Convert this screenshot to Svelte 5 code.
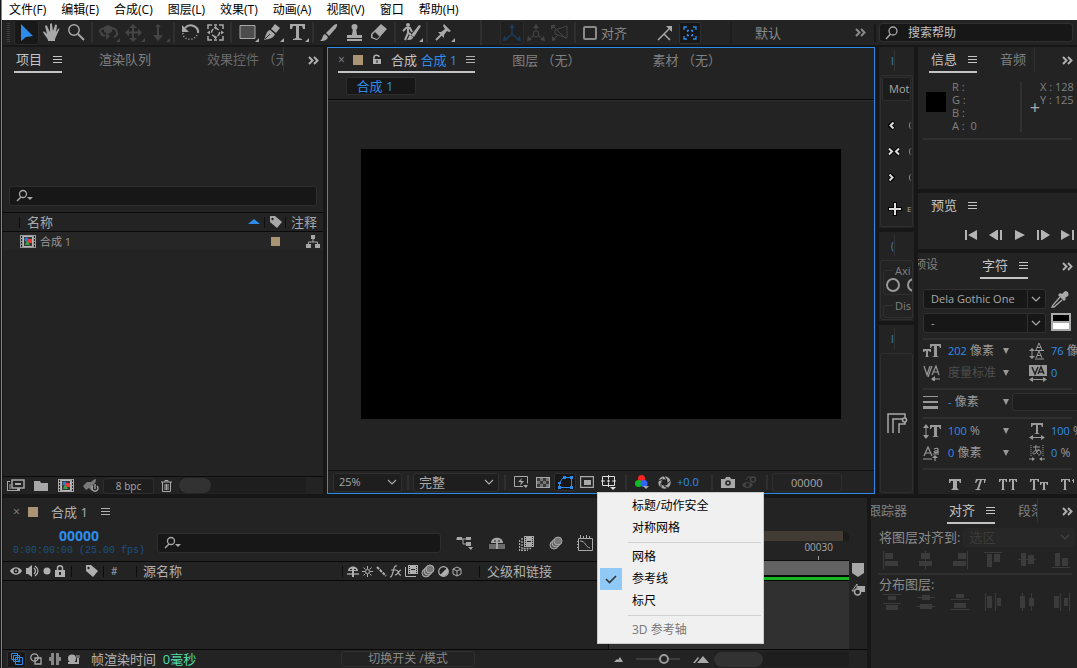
<script>
let menus = ["文件(F)", "编辑(E)", "合成(C)", "图层(L)", "效果(T)", "动画(A)", "视图(V)", "窗口", "帮助(H)"];

let corner = '<path d="M24 18v4h-4z"/>';

// [width, height, markup]
let icons = {
  arrow: [25, 25, '<path d="M7 4v17l5-4 7-1z" fill="#2d8ceb"/>'],
  hand: [25, 25, '<path d="M9 20c-1-3-4-5-5-8 1-1 2 0 4 2L6 6c1-1 2-1 2 0l3 6V4c1-1 2-1 2 0l1 7 2-6c1-1 2 0 2 1l-1 6 2-3c1-1 2 0 1 1l-4 9v2H9z"/>'],
  zoom: [25, 25, '<circle cx="10" cy="10" r="5.2" fill="none" stroke="currentColor" stroke-width="1.5"/><path d="M14 14l6 6" stroke="currentColor" stroke-width="2"/>'],
  orbit: [25, 25, '<path d="M7 14c-6-2-2-7 3-5M14 8c8 0 9 7 4 9M9 15c-2 1-4 0-4-2" fill="none" stroke="currentColor" stroke-width="2"/><path d="M8 7l4-2 4 2v5l-4 2-4-2zM10 13l4 3-4 4z"/>' + corner],
  pan: [25, 25, '<path d="M12 6v13M6 12.500h13" stroke="currentColor" stroke-width="2"/><path d="M12 4l4 4H8zM12 22l4-4H8zM4 12.500l4-4v8zM21 12.500l-4-4v8z"/>' + corner],
  dolly: [25, 25, '<path d="M12 5v13" stroke="currentColor" stroke-width="2"/><path d="M9 7h6l-3-3zM7 15h10l-5 6z"/>' + corner],
  rotate: [25, 25, '<path d="M7 8c5-6 14-1 13 5" fill="none" stroke="currentColor" stroke-width="2"/><path d="M19 15c-3 6-14 6-14-2" fill="none" stroke="currentColor" stroke-width="1.500" stroke-dasharray="1 2"/><path d="M4 5v7h7z"/>'],
  anchor: [25, 25, '<path d="M5 9V5h4M16 5h4v4M20 16v4h-4M9 20H5v-4M11 5h3M11 20h3" fill="none" stroke="currentColor" stroke-width="1.5"/><circle cx="12.5" cy="12.5" r="4" fill="none" stroke="currentColor" stroke-width="1.5" stroke-dasharray="4 2"/><path d="M12.500 5.500l2 3h-4zM12.500 19.500l2-3h-4zM4 12.500l3-2v4zM21 12.500l-3-2v4z"/>'],
  rect: [25, 25, '<path d="M5 5.500h15v13H5z" fill="#4d4d4d" stroke="currentColor"/>' + corner],
  pen: [25, 25, '<path d="M4 20c2-4 2-9 6-10l5 4c-1 4-6 5-11 6z"/><path d="M11 9l4-5 5 4-4 5z"/><path d="M5 19l5-5M10.500 9.500l5 4.500" stroke="#232323"/>' + corner],
  type: [25, 25, '<path d="M5 4h15v5h-2l-1-3h-3v12l3 1v1H8v-1l3-1V6H8L7 9H5z"/>' + corner],
  brush: [25, 25, '<path d="M19 4c2 0 1 2 0 4l-7 8-3-3 8-8zM8 14l3 3c-1 4-5 4-8 4 3-2 2-6 5-7z"/>'],
  stamp: [25, 25, '<circle cx="12.500" cy="7" r="3"/><path d="M11 8h3l1 7h5v3H5v-3h5zM5 19h15v2H5z"/>'],
  eraser: [25, 25, '<path d="M4 14L14 4l6 5-10 11-6-2z"/><path d="M5 14.500l3-3 5 5-3 3-5-2z" fill="#232323" stroke="currentColor"/>'],
  roto: [25, 25, '<path d="M20 5l2 1-7 11-3-2zM11 15l3 2c0 3-4 3-6 3 2-2 1-4 3-5z"/><circle cx="9" cy="5" r="2"/><path d="M4 11l3-3h4l2 4M9 8v5l-3 7M10 13l2 2" fill="none" stroke="currentColor" stroke-width="2"/>' + corner],
  pin: [25, 25, '<path d="M13 4l7 7-2 1-2-1-3 4v3L7 12h3l4-3-2-3z"/><path d="M11 14l-6 6" stroke="currentColor" stroke-width="2"/>' + corner],
  axis: [24, 24, '<path d="M12 5v8l-7 6M12 13l7 6" fill="none" stroke="currentColor" stroke-width="1.500"/><path d="M12 3l3 4H9zM3 20l1-5 4 4zM21 20l-1-5-4 4z"/>'],
  axisWorld: [24, 24, '<circle cx="12" cy="13" r="3" fill="none" stroke="currentColor"/><path d="M12 5v5M9 15l-4 3M15 15l4 3" stroke="currentColor"/><path d="M12 3l3 4H9zM3 20l1-5 4 4zM21 20l-1-5-4 4z"/>'],
  axisView: [24, 24, '<path d="M7 9l12-4v12l-12-4zM5 5l13 13M5 19l5-5" fill="none" stroke="currentColor"/><path d="M3 4h5L3 9zM4 20v-5l4 4z"/>'],
  snapEdge: [20, 20, '<path d="M3 17l6-6M9 11l6 6M8 12l8-8" fill="none" stroke="currentColor" stroke-width="1.500"/><path d="M11 3h6v6l-3-3z"/>'],
  snapBox: [20, 20, '<path d="M4 7V4h3M13 4h3v3M16 13v3h-3M7 16H4v-3M7.500 9V7.500H9M11 7.500h1.500V9M12.500 11v1.500H11M9 12.500H7.500V11" fill="none" stroke="currentColor" stroke-width="1.300"/>'],
  more: [11, 9, '<path d="M1 1l3.500 3.500L1 8M6 1l3.500 3.500L6 8" fill="none" stroke="currentColor" stroke-width="2"/>'],
  search: [16, 16, '<circle cx="9" cy="6" r="4" fill="none" stroke="currentColor" stroke-width="1.300"/><path d="M6.500 9L2 14" stroke="currentColor" stroke-width="1.500"/>'],
  searchDrop: [18, 14, '<circle cx="7" cy="5" r="3.500" fill="none" stroke="currentColor" stroke-width="1.300"/><path d="M5 8L1 12" stroke="currentColor" stroke-width="1.500"/><path d="M11 8h6l-3 3z"/>'],
  menu: [9, 9, '<path d="M0 1.500h9M0 4.500h9M0 7.500h9" stroke="currentColor"/>'],
  lock: [10, 11, '<path d="M1 5h8v5H1z"/><path d="M2 5V3c0-2.500 5-2.500 5 0" fill="none" stroke="currentColor" stroke-width="1.500"/><path d="M5 6v3" stroke="#232323"/>'],
  lockShut: [10, 12, '<path d="M0 5h10v7H0z"/><path d="M2.500 5V3c0-3 5-3 5 0v2" fill="none" stroke="currentColor" stroke-width="1.500"/><path d="M5 7v3" stroke="#232323" stroke-width="2"/>'],
  chevron: [10, 6, '<path d="M1 1l4 4 4-4" fill="none" stroke="currentColor" stroke-width="1.200"/>'],
  down: [6, 6, '<path d="M0 0h6L3 6z"/>'],
  sort: [12, 6, '<path d="M0 5h12L6 0z" fill="#2d8ceb"/>'],
  tag: [13, 12, '<path d="M1 0h5l7 6-5 6-7-6z"/><circle cx="3.500" cy="3" r="1.200" fill="#232323"/>'],
  comp: [16, 13, '<path d="M0 0h16v13H0z"/><path d="M1.500 1v11M14.500 1v11" stroke="#232323" stroke-dasharray="2 1"/><path d="M3.500 1.500h9v10h-9z" fill="#383838" stroke="#b8b8b8"/><circle cx="6.500" cy="4.500" r="2" fill="#2678db"/><path d="M8 4h4v4H8z" fill="#ef3434"/><path d="M7 5l3 5H5z" fill="#32a447"/>'],
  tree: [14, 13, '<path d="M5 0h4v4H5zM0 9h5v4H0zM9 9h5v4H9z"/><path d="M7 4v3M2.500 9V7h9v2" fill="none" stroke="currentColor"/>'],
  interpret: [18, 13, '<path d="M5 1h12v8H5z" fill="none" stroke="currentColor" stroke-width="1.500"/><path d="M8 4h6v2H8z"/><path d="M0 2h3v1H1v8h9v-2h3v3H0z"/><path d="M3 5v5" stroke="currentColor"/>'],
  folder: [14, 11, '<path d="M0 1h6l1 2h7v8H0z"/>'],
  rocket: [18, 14, '<path d="M1 7l4-4h4c2-2 4-3 5-3 0 3-1 4-3 6l-1 6-3-3-3 2z" opacity=".65"/><path d="M11 7a3 3 0 1 0 4 0M13 5v5" fill="none" stroke="currentColor" stroke-width="1.300"/>'],
  trash: [11, 12, '<path d="M0 2h11M4 2V.500h3V2M1.500 2v9.500h8V2M4 4v6M5.500 4v6M7 4v6" fill="none" stroke="currentColor"/>'],
  eye: [12, 10, '<path d="M0 5c3-5 9-5 12 0-3 5-9 5-12 0z"/><circle cx="6" cy="5" r="2.500" fill="#232323"/><circle cx="6" cy="5" r="1"/>'],
  sound: [13, 12, '<path d="M0 3h2l4-3v12L2 9H0z"/><path d="M8 3c2 2 2 4 0 6M9 1c4 3 4 7 0 10" fill="none" stroke="currentColor" stroke-width="1.300"/>'],
  dot: [8, 8, '<circle cx="4" cy="4" r="3.500"/>'],
  shy: [12, 11, '<path d="M1 5c0-6 10-6 10 0z"/><path d="M0 8h12" stroke="currentColor" stroke-width="1.300"/><path d="M6 4v7" stroke="currentColor" stroke-width="2"/><path d="M3 3.500h2M7 3.500h2" stroke="#232323"/>'],
  sun: [11, 11, '<circle cx="5.500" cy="5.500" r="2" fill="none" stroke="currentColor"/><path d="M5.500 0v3M5.500 8v3M0 5.500h3M8 5.500h3M1.500 1.500l2 2M7.500 7.500l2 2M9.500 1.500l-2 2M3.500 7.500l-2 2" stroke="currentColor"/>'],
  slash: [11, 11, '<path d="M1 1l9 9" stroke="currentColor" stroke-width="2" stroke-dasharray="3 1"/>'],
  frames: [13, 12, '<path d="M3 0h10v9H3z"/><path d="M.500 2v9.500H11" fill="none" stroke="currentColor"/><path d="M4.500 1v7M11.500 1v7" stroke="#232323" stroke-dasharray="1 1"/><path d="M6 4.500h4" stroke="#232323"/>'],
  framesBig: [15, 15, '<path d="M5 0h10v11H5z"/><path d="M3 2v10.500h9M.500 4v10.500H9" fill="none" stroke="currentColor" stroke-width="1.300" stroke-dasharray="2 1"/><path d="M6.500 1v9M13.500 1v9" stroke="#232323" stroke-dasharray="1 1"/><path d="M8 5.500h4" stroke="#232323"/>'],
  blur: [14, 14, '<circle cx="5" cy="9" r="4" fill="#555" stroke="currentColor"/><circle cx="7" cy="7" r="4" fill="#666" stroke="currentColor"/><circle cx="9" cy="5" r="4" fill="#777" stroke="currentColor"/>'],
  half: [11, 11, '<circle cx="5.500" cy="5.500" r="4.800" fill="none" stroke="currentColor" stroke-width="1.200"/><path d="M9 2a5 5 0 0 1-7 7z"/>'],
  cube: [10, 11, '<path d="M5 1l4 2v5l-4 2-4-2V3zM1 3l4 2 4-2M5 5v5" fill="none" stroke="currentColor"/>'],
  flow: [18, 14, '<path d="M0 3h10M7 3v5h3" fill="none" stroke="currentColor"/><path d="M1 1h5v3H1zM10 1h5v3h-5zM10 6h5v4h-5zM12 11h5l-2 3z"/>'],
  shyBig: [16, 13, '<path d="M2 6c0-7 12-7 12 0z"/><path d="M0 7h16v5H0z" opacity=".55"/><path d="M8 3v9" stroke="currentColor" stroke-width="2"/><path d="M5 4h2M9 4h2" stroke="#232323"/>'],
  graph: [16, 16, '<path d="M1.500 3.500h14v12h-14z" fill="none" stroke="currentColor"/><path d="M3.500 0v3M6.500 1v2M9.500 0v3M12.500 1v2M0 6.500h2M0 9.500h2M0 12.500h2M3 6c6 0 5 6 10 7" fill="none" stroke="currentColor"/>'],
  marker: [12, 14, '<path d="M0 0h12v10l-6 4-6-4z"/>'],
  goComp: [14, 14, '<path d="M6 3h8v6H8z"/><path d="M6 1L1 8h5z" fill="#232323" stroke="currentColor"/><circle cx="6.500" cy="9" r="3" fill="#232323" stroke="currentColor" stroke-width="1.500"/>'],
  layers: [12, 12, '<path d="M.500.500h6v6h-6zM2.500 2.500h6v6h-6zM4.500 4.500h7v7h-7z" fill="#171717" stroke="#2d8ceb"/><path d="M8 6.500v3M6.500 8h3" stroke="#2d8ceb"/>'],
  modes: [12, 12, '<circle cx="4.500" cy="4.500" r="3.700" fill="none" stroke="currentColor" stroke-width="1.300"/><path d="M5 5h6v6H5z" fill="none" stroke="currentColor" stroke-width="1.300"/>'],
  inout: [12, 12, '<path d="M2 0h3v12H2V8H0V4h2zM7 0h3v4h2v4h-2v4H7z" opacity=".75"/>'],
  snail: [13, 11, '<circle cx="5" cy="4.500" r="4"/><path d="M1 9h10V4" fill="none" stroke="currentColor" stroke-width="2"/><path d="M10 4V1M12 4V1" stroke="currentColor"/>'],
  hillSmall: [9, 5, '<path d="M0 5l3-3 1 1 2-3 3 5z"/>'],
  hillBig: [16, 7, '<path d="M0 7l5-6 1 1-4 5zM4 7l6-7 6 7z"/>'],
  fast: [14, 12, '<path d="M9 10.500H.500V.500h13v7" fill="none" stroke="currentColor"/><path d="M8 2L4 6h3l-1 4 4-5H7zM9 9h5l-2 3z"/>'],
  checker: [14, 11, '<path d="M0 0h14v11H0z"/><path d="M1 1h3v3H1zM7 1h3v3H7zM4 4h3v3H4zM10 4h3v3h-3zM1 7h3v3H1zM7 7h3v3H7z" fill="#3a3a3a"/><path d="M4 1h3v3H4zM10 1h3v3h-3zM1 4h3v3H1zM7 4h3v3H7zM4 7h3v3H4zM10 7h3v3h-3z" fill="#777"/>'],
  mask: [15, 13, '<path d="M1.500 11.500V8c1-4 3-6 5-6.500h7v10z" fill="none" stroke="#2d8ceb"/><path d="M0 10h3v3H0zM12 10h3v3h-3zM12 0h3v3h-3zM5 0h3v3H5zM0 6h3v2H0z" fill="#2d8ceb"/>'],
  region: [14, 12, '<path d="M.600.600h12.800v10.800H.600z" fill="none" stroke="currentColor" stroke-width="1.200"/><path d="M4 4h7v5H4z"/>'],
  grid: [16, 15, '<path d="M1.500 1.500h12v9h-12zM7.500 0v4M7.500 8v4M0 6h4M11 6h4M6 6h3M7.500 4.500v3" fill="none" stroke="#ddd"/><path d="M9 12h6l-3 3z" fill="#ddd"/>'],
  rgb: [14, 14, '<circle cx="6.500" cy="3.500" r="3.500" fill="#f22"/><circle cx="3.500" cy="8.500" r="3.500" fill="#1b2"/><circle cx="9" cy="8.500" r="3.500" fill="#36f"/><path d="M8 11h6l-3 3z"/>'],
  aperture: [13, 13, '<circle cx="6.500" cy="6.500" r="4.700" fill="none" stroke="currentColor" stroke-width="3"/><path d="M6 0l3 4M12.500 5L9 8M10 12l-4-2M3 12l0-5M0 5l5-2" stroke="#232323"/>'],
  camera: [14, 11, '<path d="M0 2h4l1-2h4l1 2h4v9H0z"/><circle cx="7" cy="6" r="2.800" fill="#232323"/><circle cx="7" cy="6" r="1.200"/>'],
  showSnap: [15, 13, '<path d="M0 9c2-4 9-4 11 0-2 4-9 4-11 0z"/><circle cx="5.500" cy="9" r="2" fill="#232323"/><circle cx="11" cy="3.500" r="2.500" fill="none" stroke="currentColor" stroke-width="1.500"/><path d="M4 4l2-3h3" stroke="currentColor" fill="none"/>'],
  first: [13, 10, '<path d="M0 0h2v10H0zM12 0v10L3 5z"/>'],
  prev: [13, 10, '<path d="M0 5l8-5v10zM8 0h1v10H8zM11 0h2v10h-2z"/>'],
  play: [13, 10, '<path d="M2 0l10 5-10 5z"/>'],
  next: [13, 10, '<path d="M0 0h2v10H0zM4 0h1v10H4zM5 0l8 5-8 5z"/>'],
  last: [13, 10, '<path d="M0 0l9 5-9 5zM11 0h2v10h-2z"/>'],
  easeIn: [7, 9, '<path d="M6 1L2 4.500 6 8" fill="none" stroke="#000" stroke-width="4"/><path d="M5.500 1.500L2.500 4.500l3 3" fill="none" stroke="#ddd" stroke-width="2"/>'],
  easeBoth: [12, 9, '<path d="M1 1l3 3.500L1 8M11 1L8 4.500 11 8" fill="none" stroke="#000" stroke-width="4"/><path d="M1 1.500l3 3-3 3M11 1.500l-3 3 3 3" fill="none" stroke="#ddd" stroke-width="2"/>'],
  easeOut: [7, 9, '<path d="M1 1l4 3.500L1 8" fill="none" stroke="#000" stroke-width="4"/><path d="M1.500 1.500l3 3-3 3" fill="none" stroke="#ddd" stroke-width="2"/>'],
  plus: [14, 14, '<path d="M7 0v14M0 7h14" stroke="#000" stroke-width="4"/><path d="M7 1v12M1 7h12" stroke="#ddd" stroke-width="2"/>'],
  corners: [22, 22, '<path d="M2 21V2h17v4M7 21V7h10M13 21v-9h6v-2" fill="none" stroke="currentColor" stroke-width="1.500"/><circle cx="18.500" cy="8" r="2" fill="#232323" stroke="currentColor" stroke-width="1.500"/>'],
  dropper: [18, 18, '<path d="M11 4l2-2c2-3 6 1 4 4l-3 2 1 1-2 2-6-6 2-2z"/><path d="M9 7l-7 8-1 2 2 0 8-7" fill="none" stroke="currentColor" stroke-width="1.300"/>'],
  size: [18, 16, '<path d="M7 1h11v4h-1l-1-2h-2v10l2 1H9l2-1V3H9L8 5H7zM0 6h8v3H7L6 8H5v5l1 1H2l1-1V8H2L1 9H0z"/>'],
  leading: [16, 18, '<path d="M7 8l3-7 3 7M8 5.500h4M7 16l3-7 3 7M8 13.500h4M6 8.500h9M6 17h9M3 8v8" fill="none" stroke="currentColor"/><path d="M0 9h6L3 6zM0 14h6l-3 3z"/>'],
  kerning: [18, 16, '<path d="M1 1l3 9 3-9M9 10l4-9 3 9M10 7h5M9 1L5 12M10 14h7" fill="none" stroke="currentColor" stroke-width="1.200"/><path d="M8 14l4-3v6z"/>'],
  tracking: [18, 17, '<path d="M0 0h18v11H0z"/><path d="M3 2l3 7 3-7M9 9l3-7 3 7M10 7h4" fill="none" stroke="#232323" stroke-width="1.500"/><path d="M2 14.500h14" stroke="currentColor"/><path d="M0 14.500l4-2.500v5zM18 14.500L14 12v5z"/>'],
  stroke: [15, 13, '<path d="M0 0h15v1H0zM0 5h15v2H0zM0 10h15v3H0z"/>'],
  vscale: [18, 15, '<path d="M7 1h11v4h-1l-1-2h-2v9l2 1H9l2-1V3H9L8 5H7z"/><path d="M3 2v11" stroke="currentColor"/><path d="M0 4h6L3 0zM0 11h6l-3 4z"/>'],
  hscale: [16, 17, '<path d="M2 0h12v4h-1l-1-2H9v8l2 1H5l2-1V2H4L3 4H2z"/><path d="M2 14.500h12" stroke="currentColor"/><path d="M0 14.500L4 12v5zM16 14.500L12 12v5z"/>'],
  baseline: [16, 15, '<path d="M1 10l4-9 4 9M2 7h6M0 13h9M10 8h6M11 3c5-2 4 0 4 4M15 5c-5-1-5 3 0 1M12 10v5" fill="none" stroke="currentColor" stroke-width="1.200"/><path d="M9 12h6l-3-3z"/>'],
  tsume: [16, 16, '<path d="M2 0v11M14 0v11" stroke="currentColor" stroke-dasharray="1 1"/><path d="M4 2h7M7 0c-1 4 0 7 2 9M10 4c-1 3-6 7-6 4s8-4 8-1-2 3-3 3M0 14h5M16 14h-5" fill="none" stroke="currentColor"/><path d="M3 12l3 2-3 2zM13 12l-3 2 3 2z"/>'],
  bold: [12, 11, '<path d="M0 0h12v4h-1l-1-2H8v7l2 2H2l2-2V2H2L1 4H0z"/>'],
  italic: [12, 11, '<path d="M2 0h10l-1 4h-1V1H8L5 10h2l-1 1H1l1-1h1L6 1H4L2 4H1z"/>'],
  caps: [18, 11, '<path d="M0 0h8v3H7L6 1H5v9l1 1H2l1-1V1H2L1 3H0zM10 0h8v3h-1l-1-2h-1v9l1 1h-4l1-1V1h-1l-1 2h-1z"/>'],
  smallCaps: [18, 11, '<path d="M0 0h9v3H8L7 1H5v9l1 1H2l1-1V1H2L1 3H0zM10 3h8v3h-1l-1-2h-1v6l1 1h-4l1-1V4h-1l-1 2h-1z"/>'],
  superscript: [14, 11, '<path d="M0 0h9v3H8L7 1H5v9l1 1H2l1-1V1H2L1 3H0zM12 0h1v4h-1zM11 1h1v1h-1z"/>'],
  alignL: [18, 18, '<path d="M0 0h1v18H0zM2 2h8v6H2zM2 10h13v5H2z"/>'],
  alignC: [18, 18, '<path d="M8 0h1v18H8zM4 2h9v6H4zM2 10h13v5H2z"/>'],
  alignR: [18, 18, '<path d="M16 0h1v18h-1zM7 2h8v6H7zM2 10h13v5H2z"/>'],
  alignT: [18, 18, '<path d="M0 1h18v1H0zM3 3h5v13H3zM10 3h6v8h-6z"/>'],
  alignM: [18, 18, '<path d="M0 8h18v1H0zM3 2h5v13H3zM10 4h6v9h-6z"/>'],
  alignB: [18, 18, '<path d="M0 16h18v1H0zM3 2h5v13H3zM10 7h6v8h-6z"/>'],
  distT: [18, 18, '<path d="M0 1h18v1H0zM0 10h18v1H0zM5 3h8v4H5zM3 12h12v5H3z"/>'],
  distM: [18, 18, '<path d="M0 4h18v1H0zM0 13h18v1H0zM5 2h8v5H5zM3 11h12v5H3z"/>'],
  distB: [18, 18, '<path d="M0 6h18v1H0zM0 16h18v1H0zM5 1h8v4H5zM3 10h12v5H3z"/>'],
  distL: [18, 18, '<path d="M1 0h1v18H1zM11 0h1v18h-1zM3 3h5v12H3zM13 5h4v8h-4z"/>'],
  distC: [18, 18, '<path d="M4 0h1v18H4zM13 0h1v18h-1zM2 3h5v12H2zM11 5h5v8h-5z"/>'],
  distR: [18, 18, '<path d="M8 0h1v18H8zM17 0h1v18h-1zM2 3h5v12H2zM12 5h4v8h-4z"/>'],
  check: [12, 9, '<path d="M1 4l3.500 3.500L11 1" fill="none" stroke="#333" stroke-width="1.600"/>'],
  fx: [12, 13, '<path d="M7 1c-3-1-3 3-4 6s-1 5-3 5M1 5h5M6 5c3 0 2 6 5 5M11 5c-2 0-3 5-6 5" fill="none" stroke="currentColor" stroke-width="1.200"/>'],
};

let toolGroups = [
  ["arrow", "hand", "zoom"],
  ["orbit", "pan", "dolly"],
  ["rotate", "anchor"],
  ["rect", "pen", "type"],
  ["brush", "stamp", "eraser"],
  ["roto"],
  ["pin"],
];
let dimTools = ["orbit", "pan", "dolly"];

let guides = $state([
  { label: "标题/动作安全", checked: false },
  { label: "对称网格", checked: false },
  null,
  { label: "网格", checked: false },
  { label: "参考线", checked: true },
  { label: "标尺", checked: false },
  null,
  { label: "3D 参考轴", checked: false, disabled: true },
]);

let snapping = $state(false);
let tlZoom = $state(68);

function toggleGuide(g) {
  g.checked = !g.checked;
}
</script>

{#snippet icon(name)}
  <svg class="icon" width={icons[name][0]} height={icons[name][1]} viewBox="0 0 {icons[name][0]} {icons[name][1]}" fill="currentColor" aria-hidden="true">{@html icons[name][2]}</svg>
{/snippet}

{#snippet iconButton(name)}
  <button class="ib" aria-label={name}>{@render icon(name)}</button>
{/snippet}

<div class="app">
  <nav class="menubar">
    {#each menus as m}
      <button>{m}</button>
    {/each}
  </nav>

  <div class="toolbar">
    <span class="grip"></span>
    {#each toolGroups as group, i}
      {#if i > 0}<span class="sep"></span>{/if}
      {#each group as t}
        <button class="tool" class:active={t === "arrow"} class:dim={dimTools.includes(t)} aria-label={t}>{@render icon(t)}</button>
      {/each}
    {/each}
    <div class="axes">
      <button class="tool axis-on" aria-label="axis">{@render icon("axis")}</button>
      <button class="tool dim" aria-label="world">{@render icon("axisWorld")}</button>
      <button class="tool dim" aria-label="view">{@render icon("axisView")}</button>
    </div>
    <span class="sep"></span>
    <label class="snap"><input type="checkbox" bind:checked={snapping} />对齐</label>
    <div class="snap-opts">
      {@render iconButton("snapEdge")}
      <button class="ib boxed blue" aria-label="snap">{@render icon("snapBox")}</button>
    </div>
    <div class="workspace-name">
      <button>默认</button>
      {@render iconButton("more")}
    </div>
    <label class="help">{@render icon("search")}<input type="text" placeholder="搜索帮助" /></label>
  </div>

  <div class="upper">
    <section class="panel project">
      <div class="tabs">
        <button class="tab on">项目 {@render icon("menu")}</button>
        <button class="tab queue">渲染队列</button>
        <button class="tab clip effects">效果控件 （无）</button>
        <span class="tabs-more">{@render iconButton("more")}</span>
      </div>
      <div class="preview-space"></div>
      <label class="search">{@render icon("searchDrop")}<input type="text" aria-label="搜索" /></label>
      <table class="items">
        <thead>
          <tr>
            <th class="c-pad"></th>
            <th class="c-name"><div>名称 {@render icon("sort")}</div></th>
            <th class="c-tag">{@render icon("tag")}</th>
            <th class="c-note">注释</th>
          </tr>
        </thead>
        <tbody>
          <tr>
            <td></td>
            <td><div class="item">{@render icon("comp")}合成 1</div></td>
            <td><i class="swatch small"></i></td>
            <td class="tree">{@render icon("tree")}</td>
          </tr>
        </tbody>
      </table>
      <div class="grow"></div>
      <footer class="pfoot">
        {@render iconButton("interpret")}
        {@render iconButton("folder")}
        {@render iconButton("comp")}
        {@render iconButton("rocket")}
        <button class="bpc">8 bpc</button>
        {@render iconButton("trash")}
        <div class="scroll"><i class="pill"></i></div>
      </footer>
    </section>

    <section class="panel viewer">
      <div class="tabs">
        <button class="tab on comp-tab">
          <span class="close">×</span><i class="swatch"></i>{@render icon("lock")}
          <span>合成 <em>合成 1</em></span>{@render icon("menu")}
        </button>
        <button class="tab layer">图层 （无）</button>
        <button class="tab footage">素材 （无）</button>
      </div>
      <div class="crumbs"><button>合成 1</button></div>
      <div class="stage"><div class="canvas"></div></div>
      <footer class="vfoot">
        <label class="select zoomsel"><select aria-label="缩放"><option>25%</option></select>{@render icon("chevron")}</label>
        <span class="bar"></span>
        <label class="select ressel"><select aria-label="分辨率"><option>完整</option></select>{@render icon("chevron")}</label>
        <span class="bar"></span>
        {@render iconButton("fast")}
        {@render iconButton("checker")}
        <button class="ib boxed" aria-label="mask">{@render icon("mask")}</button>
        {@render iconButton("region")}
        <div class="guides">
          <button class="ib" aria-label="guides">{@render icon("grid")}</button>
          <div class="popup" role="menu">
            {#each guides as g}
              {#if g}
                <button role="menuitemcheckbox" aria-checked={g.checked} disabled={g.disabled} onclick={() => toggleGuide(g)}>
                  <span class="mark" class:checked={g.checked}>{#if g.checked}{@render icon("check")}{/if}</span>{g.label}
                </button>
              {:else}
                <hr />
              {/if}
            {/each}
          </div>
        </div>
        <span class="bar"></span>
        {@render iconButton("rgb")}
        {@render iconButton("aperture")}
        <button class="exposure">+0.0</button>
        <span class="bar"></span>
        {@render iconButton("camera")}
        <button class="ib dim" aria-label="snapshot">{@render icon("showSnap")}</button>
        <span class="bar"></span>
        <button class="frame">00000</button>
      </footer>
    </section>

    <div class="narrow">
      <section class="panel motion">
        <div class="mini-tab"><span>I</span></div>
        <div class="mini-body">
          <button class="mot">Moti</button>
          <div class="mrow">{@render icon("easeIn")}<i class="knob"></i></div>
          <div class="mrow">{@render icon("easeBoth")}<i class="knob"></i></div>
          <div class="mrow">{@render icon("easeOut")}<i class="knob"></i></div>
          <div class="mrow add">{@render icon("plus")}<span>E</span></div>
        </div>
      </section>
      <section class="panel camera">
        <div class="mini-tab"><span>(</span></div>
        <div class="mini-body">
          <fieldset><legend>Axi</legend><i class="ring"></i><i class="ring"></i></fieldset>
          <fieldset><legend>Dis</legend></fieldset>
        </div>
      </section>
      <section class="panel last">
        <div class="mini-tab"><span>I</span></div>
        <div class="mini-body center">{@render icon("corners")}</div>
      </section>
    </div>

    <div class="side">
      <section class="panel info">
        <div class="tabs">
          <button class="tab on">信息 {@render icon("menu")}</button>
          <button class="tab audio">音频</button>
          <span class="tabs-more">{@render iconButton("more")}</span>
        </div>
        <div class="info-body">
          <i class="color"></i>
          <div class="rgba"><span>R :</span><span>G :</span><span>B :</span><span>A : &nbsp;0</span></div>
          <i class="vline"></i>
          <span class="cross">+</span>
          <div class="xy"><span>X : 128</span><span>Y : 125</span></div>
        </div>
        <hr />
      </section>

      <section class="panel play">
        <div class="tabs"><button class="tab">预览 {@render icon("menu")}</button></div>
        <div class="transport">
          {#each ["first", "prev", "play", "next", "last"] as p}
            {@render iconButton(p)}
          {/each}
        </div>
      </section>

      <section class="panel character">
        <div class="tabs">
          <button class="tab clip presets"><span>预设</span></button>
          <button class="tab on">字符 {@render icon("menu")}</button>
          <span class="tabs-more">{@render iconButton("more")}</span>
        </div>
        <div class="fonts">
          <div class="font-selects">
            <label class="select split"><select aria-label="字体"><option>Dela Gothic One</option></select>{@render icon("chevron")}</label>
            <label class="select split"><select aria-label="样式"><option>-</option></select>{@render icon("chevron")}</label>
          </div>
          <div class="fills">
            {@render icon("dropper")}
            <i class="fillbox"></i>
          </div>
        </div>
        <hr />
        <div class="pair">
          {@render icon("size")}<span class="val"><b>202</b> 像素</span>{@render icon("down")}{@render icon("leading")}<span class="val"><b>76</b> 像素</span>
        </div>
        <div class="pair">
          {@render icon("kerning")}<span class="val off">度量标准</span>{@render icon("down")}{@render icon("tracking")}<span class="val"><b>0</b></span>
        </div>
        <hr />
        <div class="pair">
          {@render icon("stroke")}<span class="val"><b>-</b> 像素</span>{@render icon("down")}<span class="blank"></span>
        </div>
        <hr />
        <div class="pair">
          {@render icon("vscale")}<span class="val"><b>100</b> %</span>{@render icon("down")}{@render icon("hscale")}<span class="val"><b>100</b> %</span>
        </div>
        <div class="pair">
          {@render icon("baseline")}<span class="val"><b>0</b> 像素</span>{@render icon("down")}{@render icon("tsume")}<span class="val"><b>0</b> %</span>
        </div>
        <hr />
        <div class="styles">
          {#each ["bold", "italic", "caps", "smallCaps", "superscript"] as s}
            {@render iconButton(s)}
          {/each}
        </div>
      </section>
    </div>
  </div>

  <div class="lower">
    <section class="panel timeline">
      <div class="tl-main">
        <div class="tl-left">
          <div class="tl-tab"><span class="close">×</span><i class="swatch"></i>合成 1{@render icon("menu")}</div>
          <div class="tl-head">
            <div class="time"><strong>00000</strong><small>0:00:00:00 (25.00 fps)</small></div>
            <label class="search">{@render icon("searchDrop")}<input type="text" aria-label="搜索图层" /></label>
            <div class="tl-switches">
              {@render iconButton("flow")}
              {@render iconButton("shyBig")}
              {@render iconButton("framesBig")}
              {@render iconButton("blur")}
              {@render iconButton("graph")}
            </div>
          </div>
          <div class="columns">
            <div class="col av">{@render icon("eye")}{@render icon("sound")}{@render icon("dot")}{@render icon("lockShut")}</div>
            <div class="col label">{@render icon("tag")}</div>
            <div class="col num">#</div>
            <div class="col source">源名称</div>
            <div class="col switches">
              {#each ["shy", "sun", "slash", "fx", "frames", "blur", "half", "cube"] as s}
                {@render icon(s)}
              {/each}
            </div>
            <div class="col parent">父级和链接</div>
          </div>
        </div>
        <div class="tl-right">
          <div class="workarea"><i></i></div>
          <div class="ruler"><span>00030</span></div>
          <div class="cache"></div>
          <div class="track"></div>
        </div>
        <div class="tl-gutter">
          {@render icon("marker")}
          {@render icon("goComp")}
        </div>
      </div>
      <footer class="tfoot">
        <div class="toggles">
          <button class="ib boxed" aria-label="layers">{@render icon("layers")}</button>
          {@render iconButton("modes")}
          {@render iconButton("inout")}
          {@render iconButton("snail")}
        </div>
        <span class="render">帧渲染时间 &nbsp;<em>0毫秒</em></span>
        <button class="mode">切换开关 /模式</button>
        <div class="tl-zoom">
          {@render icon("hillSmall")}
          <input type="range" min="0" max="100" bind:value={tlZoom} aria-label="时间缩放" />
          {@render icon("hillBig")}
        </div>
        <div class="scroll"><i class="pill"></i></div>
      </footer>
    </section>

    <section class="panel align">
      <div class="tabs">
        <button class="tab clip tracker"><span>跟踪器</span></button>
        <button class="tab on">对齐 {@render icon("menu")}</button>
        <button class="tab clip para">段落</button>
        <span class="tabs-more">{@render iconButton("more")}</span>
      </div>
      <div class="align-to">
        <label for="align-target">将图层对齐到:</label>
        <span class="select disabled"><select id="align-target" disabled><option>选区</option></select>{@render icon("chevron")}</span>
      </div>
      <div class="align-row">
        {#each ["alignL", "alignC", "alignR", "alignT", "alignM", "alignB"] as a}
          {@render iconButton(a)}
        {/each}
      </div>
      <hr />
      <p>分布图层:</p>
      <div class="align-row">
        {#each ["distT", "distM", "distB", "distL", "distC", "distR"] as a}
          {@render iconButton(a)}
        {/each}
      </div>
    </section>
  </div>
</div>

<style>
  :global(body) {
    margin: 0;
    background: #171717;
  }
  .app {
    display: flex;
    flex-direction: column;
    min-height: 100vh;
    box-sizing: border-box;
    margin-left: 1px;
    border-left: 1px solid #2fa9ae;
    padding-left: 1px;
    overflow: hidden;
    background: #171717;
    color: #a8a8a8;
    font: 13px/18px "Open Sans", "Noto Sans CJK SC", sans-serif;
  }
  button, input, select {
    font: inherit;
    color: inherit;
    background: none;
    border: 0;
    padding: 0;
    margin: 0;
    min-width: 0;
    box-sizing: border-box;
    outline: none;
  }
  button {
    white-space: nowrap;
  }
  em {
    font-style: normal;
    color: #2d8ceb;
  }
  hr {
    border: 0;
    height: 2px;
    margin: 0;
    background: #303030;
  }
  .icon {
    display: block;
    flex: none;
  }
  .panel {
    background: #232323;
    display: flex;
    flex-direction: column;
    min-width: 0;
    box-sizing: border-box;
  }
  .grow {
    flex: 1;
  }
  .ib {
    display: flex;
    align-items: center;
    justify-content: center;
    flex: none;
  }
  .dim {
    color: #444;
  }
  .blue {
    color: #2d8ceb;
  }
  .boxed {
    background: #171717;
    box-shadow: inset 0 0 0 1px #303030;
    border-radius: 2px;
  }
  .swatch {
    width: 10px;
    height: 10px;
    background: #a99574;
    flex: none;
  }
  .small {
    display: block;
    width: 9px;
    height: 9px;
    margin: 0 auto;
  }
  .close {
    font-size: 12px;
    color: #8a8a8a;
    width: 6px;
  }

  .menubar {
    display: flex;
    gap: 15px;
    height: 20px;
    margin-left: -1px;
    padding-left: 7px;
    background: #fff;
    color: #000;
    font-size: 12px;
  }

  .toolbar {
    display: flex;
    align-items: center;
    height: 25px;
    padding-left: 4px;
    margin-bottom: 2px;
    background: #232323;
  }
  .grip {
    width: 3px;
    height: 19px;
    margin-right: 4px;
    background: repeating-linear-gradient(#3d3d3d 0 1px, #232323 1px 2px);
  }
  .tool {
    width: 25px;
    height: 25px;
    flex: none;
  }
  .tool.active, .axis-on {
    background: #181818;
    border-radius: 3px;
    box-shadow: inset 0 0 0 1px #2b2b2b;
  }
  .sep {
    width: 2px;
    height: 21px;
    margin: 0 3px 0 2px;
    flex: none;
    background: #2f2f2f;
  }
  .axes {
    display: flex;
    margin-left: 24px;
    padding-left: 18px;
    border-left: 2px solid #2f2f2f;
  }
  .axes .tool {
    width: 24px;
  }
  .axes .axis-on {
    color: #1c3b5c;
    background: #202020;
  }
  .snap {
    display: flex;
    align-items: center;
    gap: 4px;
    margin: 0 27px 0 4px;
    color: #8a8a8a;
  }
  .snap input {
    appearance: none;
    width: 14px;
    height: 14px;
    border: 2px solid #8a8a8a;
    border-radius: 2px;
  }
  .snap-opts {
    display: flex;
    gap: 3px;
    padding-right: 29px;
    border-right: 2px solid #1d1d1d;
  }
  .snap-opts .ib {
    width: 22px;
    height: 22px;
  }
  .workspace-name {
    display: flex;
    flex: 1;
    justify-content: space-between;
    padding: 0 8px 0 23px;
    border-right: 2px solid #171717;
    color: #8a8a8a;
  }
  .help {
    display: flex;
    align-items: center;
    gap: 8px;
    width: 194px;
    height: 19px;
    box-sizing: border-box;
    margin: 0 4px 0 3px;
    padding-left: 4px;
    background: #171717;
    border: 1px solid #303030;
    border-radius: 3px;
    font-size: 12px;
  }
  .help input, .search input {
    flex: 1;
    height: 17px;
  }
  .help input::placeholder {
    color: #c0c0c0;
  }

  .upper {
    display: flex;
    flex: 1 0 auto;
    gap: 4px;
  }
  .lower {
    display: flex;
    gap: 4px;
    margin-top: 4px;
    height: 170px;
  }

  .tabs {
    display: flex;
    height: 26px;
    flex: none;
    padding-left: 11px;
    overflow: hidden;
  }
  .tab {
    display: flex;
    align-items: center;
    gap: 11px;
    height: 26px;
    padding: 0 0 0 2px;
    flex: none;
    color: #808080;
    border-bottom: 2px solid transparent;
  }
  .tab.on, .play .tab {
    color: #c4c4c4;
  }
  .tab.on {
    border-color: #c4c4c4;
  }
  .tabs-more {
    display: flex;
    margin-left: auto;
    padding-right: 4px;
    color: #b0b0b0;
  }
  .clip {
    overflow: hidden;
    border-right: 1px solid #333;
  }

  .project {
    width: 320px;
    flex: none;
  }
  .queue {
    margin-left: 35px;
  }
  .effects {
    width: 79px;
    margin-left: 54px;
    color: #6a6a6a;
  }
  .preview-space {
    height: 113px;
  }
  .search {
    display: flex;
    align-items: center;
    height: 20px;
    box-sizing: border-box;
    padding-left: 6px;
    background: #171717;
    border: 1px solid #2e2e2e;
    border-radius: 3px;
  }
  .project .search {
    margin: 0 6px 6px;
  }
  .items {
    width: 100%;
    border-collapse: collapse;
    table-layout: fixed;
  }
  .items th, .items td {
    padding: 0;
    height: 18px;
    font-weight: 400;
    text-align: left;
    line-height: 17px;
  }
  .items th {
    border-top: 1px solid #0a0a0a;
    border-bottom: 1px solid #0a0a0a;
    background: linear-gradient(#0f0f0f, #0f0f0f) right center / 1px 11px no-repeat;
  }
  .items th.c-note {
    background: none;
    width: 32px;
    padding-left: 5px;
    white-space: nowrap;
  }
  .c-pad {
    width: 17px;
  }
  .c-name div {
    display: flex;
    align-items: center;
    justify-content: space-between;
    padding: 0 5px 0 7px;
  }
  .c-tag {
    width: 21px;
  }
  .c-tag .icon {
    margin: 0 auto;
  }
  .items tbody tr {
    background: #262626;
  }
  .item {
    display: flex;
    align-items: center;
    gap: 4px;
    font-size: 11px;
    color: #999;
  }
  .tree .icon {
    margin-left: 20px;
  }
  .pfoot {
    display: flex;
    align-items: center;
    height: 17px;
    border-top: 1px solid #0c0c0c;
  }
  .pfoot .ib {
    width: 25px;
  }
  .bpc {
    width: 51px;
    height: 16px;
    line-height: 14px;
    font-size: 10px;
    background: #1e1e1e;
    border: 1px solid #2e2e2e;
    border-radius: 3px;
  }
  .scroll {
    flex: 1;
    display: flex;
    margin-right: 17px;
    background: #1e1e1e;
  }
  .pill {
    width: 32px;
    height: 15px;
    border-radius: 8px;
    background: #323232;
  }

  .viewer {
    flex: 1;
    border: 1px solid #2d8ceb;
  }
  .viewer .tabs {
    height: 25px;
    padding-left: 10px;
  }
  .viewer .tab {
    height: 25px;
  }
  .viewer .comp-tab {
    gap: 9px;
    padding-left: 0;
  }
  .comp-tab .icon {
    color: #b0b0b0;
  }
  .layer {
    margin-left: 35px;
  }
  .footage {
    margin-left: 70px;
  }
  .crumbs {
    display: flex;
    padding: 4px 18px;
    height: 18px;
    border-bottom: 1px solid #080808;
    box-shadow: 0 1px #2e2e2e;
  }
  .crumbs button {
    width: 70px;
    line-height: 14px;
    padding-right: 12px;
    color: #2d8ceb;
    background: #171717;
    border: 1px solid #2e2e2e;
    border-radius: 2px;
  }
  .stage {
    flex: 1;
    display: flex;
    align-items: center;
    justify-content: center;
    box-shadow: inset 0 -1px #111;
    margin-top: 1px;
    padding-bottom: 4px;
  }
  .canvas {
    width: 88%;
    max-width: 480px;
    aspect-ratio: 16 / 9;
    background: #000;
  }
  .vfoot {
    display: flex;
    align-items: center;
    height: 22px;
    padding-left: 5px;
    font-size: 12px;
  }
  .select {
    display: flex;
    align-items: center;
    height: 19px;
    box-sizing: border-box;
    padding: 0 4px 0 5px;
    background: #1e1e1e;
    border: 1px solid #303030;
    border-radius: 3px;
  }
  .select select {
    appearance: none;
    flex: 1;
    width: 0;
    line-height: 16px;
  }
  .zoomsel {
    width: 69px;
    font-size: 11px;
  }
  .ressel {
    width: 86px;
    font-size: 13px;
  }
  .bar {
    width: 2px;
    height: 15px;
    margin: 0 4px 0 5px;
    background: #2f2f2f;
  }
  .vfoot .ib {
    width: 22px;
    height: 18px;
  }
  .guides {
    position: relative;
  }
  .popup {
    position: absolute;
    z-index: 5;
    left: -1px;
    top: 19px;
    width: 167px;
    box-sizing: border-box;
    padding: 2px;
    background: #f0f0f0;
    border: 1px solid #ccc;
    color: #000;
    font-size: 12px;
  }
  .popup button {
    display: flex;
    align-items: center;
    gap: 10px;
    width: 100%;
    height: 22px;
  }
  .popup button:disabled {
    color: #777;
  }
  .popup hr {
    height: 1px;
    margin: 3px 0 3px 28px;
    background: #d0d0d0;
  }
  .mark {
    display: flex;
    align-items: center;
    justify-content: center;
    width: 22px;
    height: 22px;
  }
  .checked {
    background: #90c8f6;
  }
  .exposure {
    color: #2d8ceb;
    font-size: 11px;
    padding: 0 7px 0 2px;
  }
  .frame {
    width: 70px;
    height: 19px;
    font-size: 11px;
    border: 1px solid #2e2e2e;
    border-radius: 3px;
  }

  .narrow {
    width: 35px;
    flex: none;
    display: flex;
    flex-direction: column;
    gap: 4px;
  }
  .mini-tab {
    height: 28px;
    flex: none;
  }
  .mini-tab span {
    display: block;
    width: 3px;
    height: 21px;
    margin: 3px 0 0 12px;
    border-right: 1px solid #333;
    line-height: 22px;
    font-size: 10px;
    color: #3d86d0;
  }
  .mini-body {
    flex: 1;
    display: flex;
    flex-direction: column;
    margin: 0 1px 1px;
    border: 1px solid #2f2f2f;
    border-radius: 3px;
    overflow: hidden;
  }
  .motion {
    height: 181px;
  }
  .camera {
    height: 89px;
  }
  .last {
    flex: 1;
  }
  .mot {
    height: 24px;
    flex: none;
    margin: 1px 1px 11px;
    padding-left: 6px;
    overflow: hidden;
    text-align: left;
    font-size: 11px;
    background: #1c1c1c;
    border: 1px solid #2e2e2e;
    border-radius: 2px;
  }
  .mrow {
    display: flex;
    align-items: center;
    justify-content: space-between;
    height: 26px;
    flex: none;
    padding-left: 7px;
    font-size: 8px;
  }
  .add {
    height: 38px;
  }
  .mrow span {
    width: 5px;
  }
  .knob {
    width: 2px;
    height: 7px;
    border-left: 1px solid #888;
    border-radius: 4px 0 0 4px;
  }
  fieldset {
    display: flex;
    gap: 5px;
    margin: 2px -8px 1px 2px;
    padding: 0 0 4px;
    min-width: 0;
    min-height: 14px;
    overflow: hidden;
    border: 1px solid #303030;
    border-radius: 3px;
    font-size: 11px;
  }
  legend {
    margin-left: 9px;
    padding: 0 2px;
    line-height: 15px;
    color: #808080;
  }
  .ring {
    width: 10px;
    height: 10px;
    flex: none;
    margin-left: 2px;
    border: 2px solid #999;
    border-radius: 50%;
  }
  .center {
    align-items: center;
    justify-content: center;
  }

  .side {
    width: 159px;
    flex: none;
    display: flex;
    flex-direction: column;
    gap: 4px;
    overflow: hidden;
  }
  .info {
    height: 142px;
  }
  .audio {
    margin-left: 21px;
    padding-right: 8px;
    border-right: 1px solid #303030;
  }
  .info-body {
    display: flex;
    padding: 7px 0 0 8px;
    height: 58px;
    overflow: hidden;
    font-size: 11px;
    color: #808080;
  }
  .color {
    width: 20px;
    height: 20px;
    flex: none;
    margin: 12px 6px 0 0;
    background: #000;
  }
  .rgba, .xy {
    display: flex;
    flex-direction: column;
    flex: none;
    line-height: 13px;
  }
  .vline {
    width: 2px;
    height: 50px;
    flex: none;
    margin: 2px 8px 0 auto;
    background: #303030;
  }
  .cross {
    padding-top: 18px;
    font-size: 18px;
    color: #aaa;
  }
  .xy {
    width: 37px;
    white-space: nowrap;
  }
  .info hr, .character hr {
    margin: 0 5px;
    flex: none;
  }
  .play {
    height: 56px;
  }
  .transport {
    display: flex;
    gap: 11px;
    padding: 11px 0 0 47px;
    color: #b4b4b4;
  }
  .character {
    flex: 1;
  }
  .character .tabs, .align .tabs {
    padding-left: 0;
  }
  .presets {
    width: 62px;
    justify-content: flex-start;
    border-right: 0;
    font-size: 12px;
  }
  .presets span {
    margin-left: -6px;
  }
  .fonts {
    display: flex;
    gap: 5px;
    padding: 10px 5px 5px;
  }
  .font-selects {
    display: flex;
    flex-direction: column;
    gap: 4px;
    width: 123px;
  }
  .split {
    height: 20px;
    padding-left: 7px;
    font-size: 11px;
    background: linear-gradient(#303030, #303030) right 17px top / 1px 100% no-repeat #171717;
  }
  .fills {
    display: flex;
    flex-direction: column;
    gap: 5px;
    padding-top: 1px;
  }
  .fillbox {
    width: 16px;
    height: 14px;
    border: 2px solid #aaa;
    background: linear-gradient(#000 45%, #aaa 45% 55%, #fff 55%);
  }
  .pair {
    display: grid;
    grid-template-columns: 25px 55px 26px 22px 60px;
    align-items: center;
    height: 22px;
    padding-left: 5px;
    overflow: hidden;
    white-space: nowrap;
    font-size: 12px;
    color: #999;
  }
  .val b {
    font-weight: 400;
    font-size: 11px;
    color: #2d8ceb;
  }
  .val.off {
    color: #4d4d4d;
  }
  .blank {
    grid-column: span 2;
    margin-left: -17px;
    height: 16px;
    border: 1px solid #303030;
    border-radius: 3px;
    background: #1e1e1e;
  }
  .character .pair + hr {
    margin: 4px 5px 1px;
  }
  .styles {
    display: flex;
    gap: 13px;
    padding: 8px 0 0 31px;
  }

  .timeline {
    flex: 1;
  }
  .tl-main {
    display: flex;
    flex: 1;
    min-height: 0;
  }
  .tl-left {
    width: 606px;
    flex: none;
    box-sizing: border-box;
    border-right: 1px solid #0f0f0f;
  }
  .tl-tab {
    display: flex;
    align-items: center;
    gap: 13px;
    height: 27px;
    padding-left: 10px;
    color: #b0b0b0;
  }
  .tl-tab .close {
    margin-right: -4px;
  }
  .tl-head {
    display: flex;
    align-items: center;
    height: 36px;
    padding-left: 9px;
  }
  .time {
    display: flex;
    flex-direction: column;
    align-items: center;
    width: 134px;
    margin-right: 11px;
    color: #2d8ceb;
  }
  .time strong {
    font-size: 14px;
    line-height: 16px;
  }
  .time small {
    font: 10px/14px "Liberation Mono", monospace;
    color: #1b4f87;
  }
  .tl-head .search {
    width: 284px;
  }
  .tl-switches {
    display: flex;
    justify-content: space-between;
    width: 137px;
    margin-left: 15px;
  }
  .columns {
    display: flex;
    height: 18px;
    border-top: 1px solid #080808;
    border-bottom: 1px solid #080808;
  }
  .col {
    display: flex;
    align-items: center;
    box-sizing: border-box;
    padding-left: 10px;
    color: #b0b0b0;
    background: linear-gradient(#0c0c0c, #0c0c0c) right center / 1px 11px no-repeat;
  }
  .av {
    width: 69px;
    gap: 4px;
    padding-left: 7px;
  }
  .label {
    width: 32px;
    padding-left: 13px;
  }
  .num {
    width: 33px;
    padding-left: 7px;
    font-size: 10px;
  }
  .source {
    flex: 1;
    padding-left: 6px;
  }
  .switches {
    width: 137px;
    gap: 3px;
    padding-left: 4px;
  }
  .parent {
    width: 128px;
    padding-left: 7px;
  }
  .tl-right {
    flex: 1;
    display: flex;
    flex-direction: column;
    padding-top: 33px;
    min-width: 0;
  }
  .workarea {
    height: 10px;
    padding-right: 6px;
    background: #1b1b1b;
    border-radius: 0 6px 0 0;
  }
  .workarea i {
    display: block;
    height: 10px;
    background: #423b33;
  }
  .ruler {
    display: flex;
    justify-content: flex-end;
    height: 19px;
    padding-right: 16px;
    line-height: 13px;
    font-size: 10px;
  }
  .ruler span {
    height: 19px;
    background: linear-gradient(#999, #999) center bottom / 1px 4px no-repeat;
  }
  .cache {
    height: 14px;
    background: #626262;
    border-top: 1px solid #0c0c0c;
    border-bottom: 2px solid #080808;
  }
  .track {
    flex: 1;
    background: #303030;
    border-top: 3px solid #14b820;
    box-shadow: inset 0 1px #080808;
  }
  .tl-gutter {
    display: flex;
    flex-direction: column;
    align-items: center;
    gap: 6px;
    width: 18px;
    padding-top: 65px;
    color: #a8a8a8;
  }
  .tfoot {
    display: flex;
    align-items: center;
    height: 18px;
    border-top: 1px solid #080808;
  }
  .toggles {
    display: flex;
    width: 88px;
    padding-left: 4px;
    box-sizing: border-box;
  }
  .toggles .ib {
    width: 19px;
    height: 17px;
  }
  .render {
    width: 250px;
    color: #b4b4b4;
  }
  .render em {
    color: #4fdca8;
  }
  .mode {
    width: 134px;
    height: 16px;
    line-height: 14px;
    font-size: 12px;
    border: 1px solid #2f2f2f;
    border-radius: 3px;
    color: #8a8a8a;
  }
  .tl-zoom {
    display: flex;
    align-items: center;
    gap: 13px;
    margin-left: 139px;
  }
  .tl-zoom input {
    appearance: none;
    width: 44px;
    height: 10px;
    background: linear-gradient(#3c3c3c, #3c3c3c) center / 100% 2px no-repeat;
  }
  .tl-zoom input::-webkit-slider-thumb {
    appearance: none;
    width: 10px;
    height: 10px;
    box-sizing: border-box;
    border: 2px solid #999;
    border-radius: 50%;
    background: #232323;
  }
  .tfoot .scroll {
    margin: 0 18px 0 5px;
  }
  .tfoot .pill {
    width: 49px;
  }

  .align {
    width: 206px;
    flex: none;
    overflow: hidden;
  }
  .tracker {
    width: 76px;
    border-right: 0;
  }
  .tracker span {
    margin-left: -5px;
  }
  .para {
    width: 22px;
    margin-left: 21px;
  }
  .align-to {
    display: flex;
    align-items: center;
    gap: 3px;
    height: 18px;
    padding: 4px 2px 5px 8px;
    color: #8c8c8c;
  }
  .align-to label {
    white-space: nowrap;
  }
  .disabled {
    flex: 1;
    border-color: #272727;
    background: #272727;
    color: #444;
  }
  .align-row {
    display: flex;
    justify-content: space-between;
    padding: 0 7px 0 12px;
    color: #3b3b3b;
  }
  .align hr {
    margin: 4px 5px 0 7px;
    flex: none;
  }
  .align p {
    margin: 0;
    padding: 0 8px;
    color: #8c8c8c;
  }
</style>
